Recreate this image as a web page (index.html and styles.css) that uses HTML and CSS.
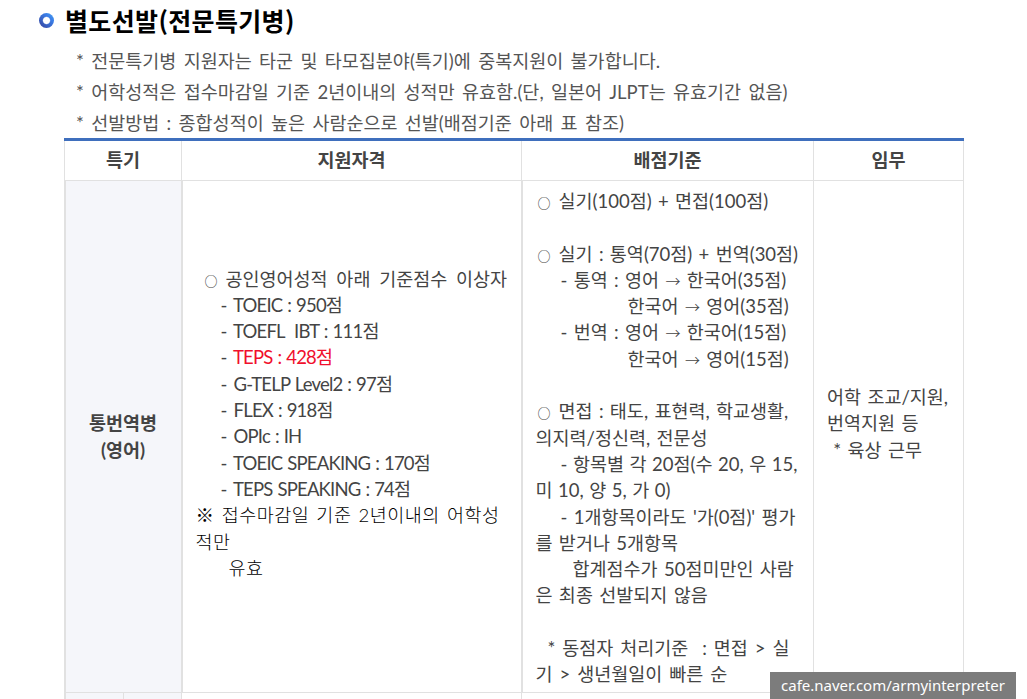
FILE: index.html
```html
<!DOCTYPE html>
<html lang="ko">
<head>
<meta charset="utf-8">
<title>별도선발(전문특기병)</title>
<link rel="stylesheet" href="styles.css">
</head>
<body>
<div class="page">
  <h2 class="title"><span class="bullet"></span>별도선발(전문특기병)</h2>
  <ul class="notes">
    <li>* 전문특기병 지원자는 타군 및 타모집분야(특기)에 중복지원이 불가합니다.</li>
    <li>* 어학성적은 접수마감일 기준 2년이내의 성적만 유효함.(단, 일본어 JLPT는 유효기간 없음)</li>
    <li>* 선발방법 : 종합성적이 높은 사람순으로 선발(배점기준 아래 표 참조)</li>
  </ul>
  <table class="grid">
    <colgroup><col class="c1"><col class="c2"><col class="c3"><col class="c4"><col class="c5"></colgroup>
    <thead>
      <tr><th colspan="2">특기</th><th>지원자격</th><th>배점기준</th><th>임무</th></tr>
    </thead>
    <tbody>
      <tr class="main">
        <td colspan="2" class="label">통번역병<br>(영어)</td>
        <td class="qual">
          <div class="i-o"><span class="o">○</span>공인영어성적 아래 기준점수 이상자</div>
          <div class="i-d"><span class="d">-</span> TOEIC : 950점</div>
          <div class="i-d"><span class="d">-</span> TOEFL &nbsp;IBT : 111점</div>
          <div class="i-d"><span class="d">-</span> <span class="red">TEPS : 428점</span></div>
          <div class="i-d"><span class="d">-</span> G-TELP Level2 : 97점</div>
          <div class="i-d"><span class="d">-</span> FLEX : 918점</div>
          <div class="i-d"><span class="d">-</span> OPIc : IH</div>
          <div class="i-d"><span class="d">-</span> TOEIC SPEAKING : 170점</div>
          <div class="i-d"><span class="d">-</span> TEPS SPEAKING : 74점</div>
          <div class="black">※ 접수마감일 기준 2년이내의 어학성적만</div>
          <div class="black i-y">유효</div>
          <div>&nbsp;</div>
        </td>
        <td class="score">
          <div class="i-s"><span class="o">○</span>실기(100점) + 면접(100점)</div>
          <div>&nbsp;</div>
          <div class="i-s"><span class="o">○</span>실기 : 통역(70점) + 번역(30점)</div>
          <div class="i-t">- 통역 : 영어 <span class="arr">→</span> 한국어(35점)</div>
          <div class="i-k">한국어 <span class="arr">→</span> 영어(35점)</div>
          <div class="i-t">- 번역 : 영어 <span class="arr">→</span> 한국어(15점)</div>
          <div class="i-k">한국어 <span class="arr">→</span> 영어(15점)</div>
          <div>&nbsp;</div>
          <div class="i-s"><span class="o">○</span>면접 : 태도, 표현력, 학교생활, 의지력/정신력, 전문성</div>
          <div class="i-t tight">- 항목별 각 20점(수 20, 우 15, 미 10, 양 5, 가 0)</div>
          <div class="i-t">- 1개항목이라도 '가(0점)' 평가를 받거나 5개항목</div>
          <div class="i-h">합계점수가 50점미만인 사람은 최종 선발되지 않음</div>
          <div>&nbsp;</div>
          <div class="i-a">* 동점자 처리기준 &nbsp;: 면접 &gt; 실기 &gt; 생년월일이 빠른 순</div>
        </td>
        <td class="duty">어학 조교/지원,<br>번역지원 등<br>&nbsp;* 육상 근무<br>&nbsp;</td>
      </tr>
      <tr class="next">
        <td class="label"></td><td class="label"></td><td></td><td></td><td></td>
      </tr>
    </tbody>
  </table>
</div>
<div class="watermark">cafe.naver.com/armyinterpreter</div>
</body>
</html>
```

FILE: styles.css
```css
html, body {
  margin: 0;
  height: 699px;
  overflow: hidden;
  background: #fff;
}
body {
  font-family: Lato, "Noto Sans CJK KR", "Noto Sans", sans-serif;
  color: #444;
}
.page {
  padding: 0 0 0 64px;
  width: 900px;
}
.title {
  display: flex;
  align-items: center;
  gap: 11px;
  margin: 0 0 0 -25px;
  height: 40px;
  font-family: "Noto Sans CJK KR", sans-serif;
  font-size: 25px;
  letter-spacing: .35px;
  font-weight: 700;
  color: #000;
  line-height: 40px;
}
.bullet {
  width: 15px;
  height: 15px;
  border-radius: 50%;
  background:
    radial-gradient(circle, #fff 0 3px, transparent 4.2px),
    linear-gradient(45deg, #37429c, #3b7fe8 70%, #4aa6f2);
}
.notes {
  list-style: none;
  margin: 6px 0 0;
  padding: 0 0 0 12px;
  height: 92px;
  font-size: 18.5px;
  line-height: 31px;
  color: #555;
  white-space: nowrap;
  word-spacing: 2.6px;
}
.grid {
  width: 899px;
  margin-left: -.5px;
  table-layout: fixed;
  border-collapse: collapse;
  border-top: 3px solid #3f6fbd;
  font-size: 18.5px;
  line-height: 26.3px;
  word-spacing: 1.6px;
}
.c1 { width: 59px; }
.c2 { width: 58px; }
.c3 { width: 340px; }
.c4 { width: 292px; }
.c5 { width: 150px; }
th, td {
  border: 1px solid #e1e1e1;
  padding: 0 13px;
  vertical-align: middle;
  font-weight: 400;
}
th {
  height: 39px;
  padding: 0;
  font-weight: 700;
  color: #444;
  text-align: center;
}
tbody td:nth-child(1) { border-left-width: 2px; }
.label {
  background: #f5f6fa;
  font-weight: 700;
  text-align: center;
  padding: 0;
}
.main { height: 512px; }
.main .label { border-right: 2px solid #e1e1e1; }
.qual { padding: 0 13px; color: #444; }
.score { padding: 7px 12px 0 13px; border-left: 2px solid #e1e1e1; vertical-align: top; line-break: anywhere; }
.o {
  display: inline-block;
  width: 21px;
  font-family: "Noto Sans CJK KR", sans-serif;
  font-size: 13px;
  font-weight: 500;
  line-height: 1;
  text-indent: 0;
}
.i-o { padding-left: 9px; word-spacing: 4px; }
.i-d { padding-left: 25px; letter-spacing: -.8px; word-spacing: 1px; }
.d { margin-right: 2px; }
.i-y { padding-left: 33px; }
.i-s { text-indent: 2px; }
.i-t { text-indent: 25px; }
.tight { word-spacing: .8px; }
.i-k { padding-left: 92px; }
.i-h { text-indent: 37px; }
.i-a { text-indent: 12px; word-spacing: 2.2px; }
.arr {
  font-family: "Noto Sans CJK KR", sans-serif;
  font-size: 15px;
  font-weight: 300;
  line-height: 0;
}
.duty { padding: 0 12px 0 13px; }
.red { color: #f00f2c; }
.black { color: #000; font-weight: 300; letter-spacing: .5px; }
.next { height: 40px; }
.watermark {
  position: absolute;
  right: 11px;
  bottom: 0;
  width: 246px;
  height: 27px;
  background: #7c7c7c;
  color: #fff;
  font-family: "Noto Sans", sans-serif;
  font-size: 15px;
  line-height: 27px;
  text-align: center;
  white-space: nowrap;
}
```
